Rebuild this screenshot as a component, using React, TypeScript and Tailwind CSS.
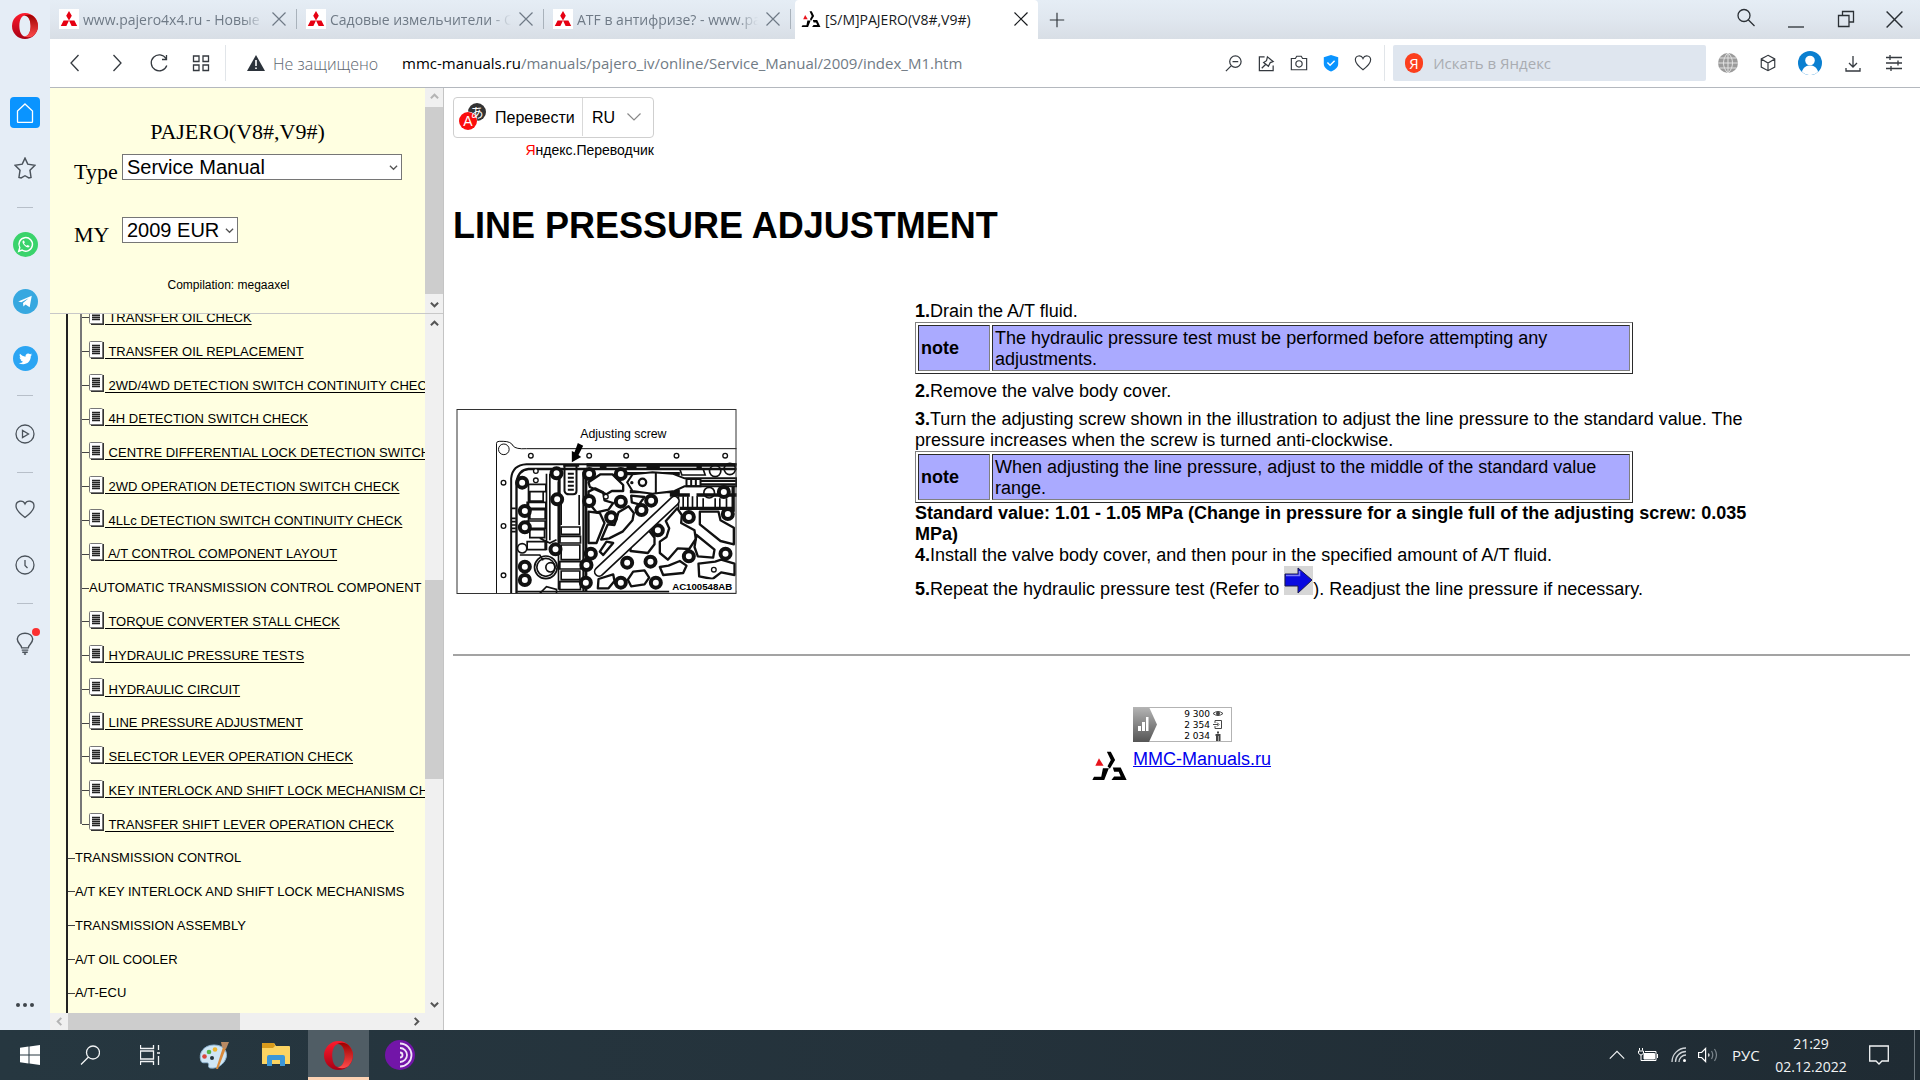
import type { ReactNode } from "react";

interface IIconProps {
  className?: string;
}

interface ITreeRow {
  label: string;
  level: 1 | 2;
  page?: boolean;
  last?: boolean;
}

const treeRows: ITreeRow[] = [
  { label: "TRANSFER OIL CHECK", level: 2, page: true },
  { label: "TRANSFER OIL REPLACEMENT", level: 2, page: true },
  { label: "2WD/4WD DETECTION SWITCH CONTINUITY CHECK", level: 2, page: true },
  { label: "4H DETECTION SWITCH CHECK", level: 2, page: true },
  { label: "CENTRE DIFFERENTIAL LOCK DETECTION SWITCH CHECK", level: 2, page: true },
  { label: "2WD OPERATION DETECTION SWITCH CHECK", level: 2, page: true },
  { label: "4LLc DETECTION SWITCH CONTINUITY CHECK", level: 2, page: true },
  { label: "A/T CONTROL COMPONENT LAYOUT", level: 2, page: true },
  { label: "AUTOMATIC TRANSMISSION CONTROL COMPONENT CHECK", level: 2 },
  { label: "TORQUE CONVERTER STALL CHECK", level: 2, page: true },
  { label: "HYDRAULIC PRESSURE TESTS", level: 2, page: true },
  { label: "HYDRAULIC CIRCUIT", level: 2, page: true },
  { label: "LINE PRESSURE ADJUSTMENT", level: 2, page: true },
  { label: "SELECTOR LEVER OPERATION CHECK", level: 2, page: true },
  { label: "KEY INTERLOCK AND SHIFT LOCK MECHANISM CHECK", level: 2, page: true },
  { label: "TRANSFER SHIFT LEVER OPERATION CHECK", level: 2, page: true, last: true },
  { label: "TRANSMISSION CONTROL", level: 1 },
  { label: "A/T KEY INTERLOCK AND SHIFT LOCK MECHANISMS", level: 1 },
  { label: "TRANSMISSION ASSEMBLY", level: 1 },
  { label: "A/T OIL COOLER", level: 1 },
  { label: "A/T-ECU", level: 1 },
];

const MitsubishiIcon = () => (
  <svg viewBox="0 0 20 20" className="size-5 shrink-0">
    <rect width="20" height="20" fill="#fff" />
    <path d="M10 11.5 7.2 6.7 10 2l2.8 4.7zM10 11.5H4.6L1.8 17h5.6zM10 11.5h5.4l2.8 5.5h-5.6z" fill="#e60012" />
  </svg>
);

const ManualsLogo = ({ className }: IIconProps) => (
  <svg viewBox="0 0 104 88" className={className}>
    <path d="M9 45 20 22 34 45z" fill="#e8131c" />
    <path d="M44 2h12l13 25-16 27-7-8 10-19zM32 52h18L36 88H0l5-10h22zM62 50h24l18 38H58l8-11h20l-6-14H66z" fill="#000" />
  </svg>
);

const OperaIcon = ({ className }: IIconProps) => (
  <svg viewBox="0 0 30 30" className={className}>
    <defs>
      <linearGradient id="operaRing" x1="0" y1="0" x2="0" y2="1">
        <stop offset="0" stopColor="#ff1b2d" />
        <stop offset="1" stopColor="#a70014" />
      </linearGradient>
      <linearGradient id="operaSide" x1="0" y1="0" x2="0" y2="1">
        <stop offset="0" stopColor="#9c0000" />
        <stop offset="1" stopColor="#ff4b4b" />
      </linearGradient>
    </defs>
    <path fillRule="evenodd" d="M15 0a15 15 0 1 0 0 30 15 15 0 0 0 0-30zm0 3c4 0 6.500 5.400 6.500 12S19 27 15 27 8.500 21.600 8.500 15 11 3 15 3z" fill="url(#operaRing)" />
    <path d="M13.500 3.200C18 1 23 1.800 25.500 4.500a15 15 0 0 1 0 21c-2.500 2.700-7.500 3.500-12 1.300 5 .8 8-5 8-11.800s-3-12.600-8-11.800z" fill="url(#operaSide)" />
  </svg>
);

const CloseIcon = ({ className }: IIconProps) => (
  <svg viewBox="0 0 14 14" className={className} fill="none" stroke="currentColor" strokeWidth="1.200">
    <path d="M.5.5l13 13M13.500.5l-13 13" />
  </svg>
);

// Outline icons of the browser chrome all share one stroke style
const LineIcon = ({ d, className = "size-5" }: { d: string; className?: string }) => (
  <svg viewBox="0 0 20 20" className={className} fill="none" stroke="currentColor" strokeWidth="1.300">
    <path d={d} />
  </svg>
);

interface ITabProps {
  title: string;
  active?: boolean;
}

const Tab = ({ title, active }: ITabProps) => (
  <div
    className={
      active
        ? "flex h-full w-[243px] items-center gap-1 rounded-t bg-white pr-[6px] pl-[6px] pb-px text-[#16191c]"
        : "flex h-full w-[247px] items-center gap-1 pl-[9px] pb-px text-[#6f7a86]"
    }
  >
    {active ? <ManualsLogo className="h-4 w-5 shrink-0" /> : <MitsubishiIcon />}
    <span
      className={
        active
          ? "flex-1 truncate text-[14px]"
          : "flex-1 overflow-hidden text-[14px] whitespace-nowrap [mask-image:linear-gradient(to_right,#000_88%,transparent_100%)]"
      }
    >
      {title}
    </span>
    <button aria-label="Закрыть вкладку" className="px-1">
      <CloseIcon className="size-[14px]" />
    </button>
    {!active && <span className="ml-[2px] h-5 w-px bg-[#a9b2bb]" />}
  </div>
);

const TabBar = () => (
  <header className="flex h-[39px] items-center bg-linear-to-b from-[#e5edf5] via-[#e0e7ef] to-[#d8dee5]">
    <Tab title="www.pajero4x4.ru - Новые сообщения" />
    <Tab title="Садовые измельчители - Общий форум" />
    <Tab title="ATF в антифризе? - www.pajero4x4.ru" />
    <div className="h-full pl-1">
      <Tab title="[S/M]PAJERO(V8#,V9#)" active />
    </div>
    <button aria-label="Новая вкладка" className="ml-[10px] text-[#30363b]">
      <LineIcon d="M10 2v16M2 10h16" className="size-[18px]" />
    </button>
    <div className="ml-auto flex items-center gap-[30px] pr-[17px] text-[#2b3035]">
      <button aria-label="Поиск" className="pb-1">
        <LineIcon d="M8 1.500a6 6 0 1 1 0 12 6 6 0 0 1 0-12M12.500 12l6 6" />
      </button>
      <button aria-label="Свернуть">
        <LineIcon d="M2 17h16" />
      </button>
      <button aria-label="Развернуть" className="pb-px">
        <LineIcon d="M2.500 6.500h10.500v11H2.500zM6.500 6V2.500h11V13h-4" />
      </button>
      <button aria-label="Закрыть">
        <CloseIcon className="size-[17px]" />
      </button>
    </div>
  </header>
);

const Divider = () => <span className="h-9 w-px bg-[#e1e5e9]" />;

const Toolbar = () => (
  <div className="flex h-[49px] items-center border-b border-[#b4b8be] bg-white text-[#34393f]">
    <div className="flex items-center gap-[22px] pl-[15px]">
      <button aria-label="Назад">
        <LineIcon d="M13.500 2 6 10l7.500 8" />
      </button>
      <button aria-label="Вперёд">
        <LineIcon d="M6.500 2 14 10l-7.500 8" />
      </button>
      <button aria-label="Обновить">
        <LineIcon d="M17 5.500a8 8 0 1 0 .8 7M17.500 2v4.500H13" />
      </button>
      <button aria-label="Экспресс-панель">
        <LineIcon d="M2.500 3h5.500v5.500H2.500zM12 3h5.500v5.500H12zM2.500 12h5.500v5.500H2.500zM12 12h5.500v5.500H12z" />
      </button>
    </div>
    <div className="ml-[14px] flex">
      <Divider />
    </div>
    <svg viewBox="0 0 18 16" className="ml-[21px] h-4 w-[18px]">
      <path d="M9 0 18 16H0z" fill="#2b323a" />
      <path d="M9 5v6M9 12.500v1.500" stroke="#fff" strokeWidth="1.600" />
    </svg>
    <span className="ml-2 w-[108px] pt-[2px] text-[16px] font-light whitespace-nowrap text-[#5d666f]">Не защищено</span>
    <a href="#address" className="ml-[21px] flex-1 truncate text-[15px] text-[#717b85]">
      <span className="text-black">mmc-manuals.ru</span>/manuals/pajero_iv/online/Service_Manual/2009/index_M1.htm
    </a>
    <div className="flex items-center gap-[14px] pr-3">
      <button aria-label="Масштаб">
        <LineIcon d="M12 2a6 6 0 1 1 0 12 6 6 0 0 1 0-12M7.500 12.500 2 18M9 8h6" className="size-[19px]" />
      </button>
      <button aria-label="Изменить">
        <LineIcon d="M8 3H2.500v14.500H17V12M11 3l6 5-3 1-2 4-5-4 3-2zM9 11l-4 4" className="size-[19px]" />
      </button>
      <button aria-label="Снимок">
        <LineIcon d="M1.500 5h4.500l1.500-2.500h5L14 5h4.500v12.500h-17zM10 7.500a3.500 3.500 0 1 1 0 7 3.500 3.500 0 0 1 0-7" className="size-[18px]" />
      </button>
      <button aria-label="Блокировка рекламы">
        <svg viewBox="0 0 20 20" className="size-[18px]">
          <path d="M10 1l8 2.500V11c0 4-4 6.500-8 8.500-4-2-8-4.500-8-8.500V3.500z" fill="#0a94ff" />
          <path d="M6 9.500l3 3 5-5" stroke="#fff" strokeWidth="1.600" fill="none" />
        </svg>
      </button>
      <button aria-label="В избранное">
        <LineIcon d="M10 17.500C4 13 1.500 10 1.500 6.500c0-5 6.500-6 8.500-1.500 2-4.500 8.500-3.500 8.500 1.500 0 3.500-2.500 6.500-8.500 11z" className="size-[18px]" />
      </button>
    </div>
    <Divider />
    <label className="ml-2 flex h-9 w-[313px] items-center gap-[10px] rounded-xs bg-[#dfe6ef] pl-3">
      <span className="flex size-5 items-center justify-center rounded-full bg-[#fc3f1d] text-[15px] leading-5 text-white">Я</span>
      <input aria-label="Поиск" placeholder="Искать в Яндекс" className="w-full bg-transparent text-[15px] outline-none placeholder:text-[#a9acb1]" />
    </label>
    <div className="flex items-center gap-[21px] pr-4 pl-3">
      <svg viewBox="0 0 20 20" className="size-5">
        <circle cx="10" cy="10" r="10" fill="#9b9b9b" />
        <path d="M0 10h20M1.500 5h17M1.500 15h17M10 0v20M10 0C4 5 4 15 10 20M10 0c6 5 6 15 0 20" stroke="#e2e2e2" strokeWidth="1" fill="none" />
      </svg>
      <button aria-label="Кошелёк">
        <LineIcon d="M10 1.500 17.500 5.500v9L10 18.500 2.500 14.500v-9zM2.500 5.500 10 10l7.500-4.500M10 10v8.500" className="size-[18px]" />
      </button>
      <button aria-label="Профиль">
        <svg viewBox="0 0 24 24" className="size-6">
          <circle cx="12" cy="12" r="12" fill="#0a7fd0" />
          <circle cx="12" cy="9.500" r="4.800" fill="#fff" />
          <path d="M4 21c1-5 4.500-6.500 8-6.500s7 1.500 8 6.500a12 12 0 0 1-16 0z" fill="#fff" />
        </svg>
      </button>
      <button aria-label="Загрузки">
        <LineIcon d="M10 3v11M6 10l4 4 4-4M3 15v3h14v-3" />
      </button>
      <button aria-label="Настройки">
        <LineIcon d="M2 4.500h16M2 10h16M2 15.500h16M6 2v5M14 7.500v5M7 13v5" />
      </button>
    </div>
  </div>
);

const RailLine = () => <span className="h-px w-4 shrink-0 bg-[#b7bfc9]" />;

const Rail = () => (
  <nav className="flex w-[50px] shrink-0 flex-col items-center bg-[#e5edf6] pb-[23px] text-[#4b535b]">
    <OperaIcon className="mt-[13px] size-[26px]" />
    <button aria-label="Главная" className="mt-[58px] flex h-[31px] w-[30px] items-center justify-center rounded-sm bg-[#0a94ff] text-white">
      <LineIcon d="M10 1 17.500 8v10.500a1 1 0 0 1-1 1h-13a1 1 0 0 1-1-1V8z" />
    </button>
    <button aria-label="Закладки" className="mt-[29px]">
      <LineIcon d="M10 1l2.500 5.500 6.500 1-4.500 4.500 1 6.500-2 .5-3.500-2-3.500 2-2-.5 1-6.500L1 7.500l6.500-1z" className="size-[22px]" />
    </button>
    <div className="mt-7 flex">
      <RailLine />
    </div>
    <button aria-label="WhatsApp" className="mt-6">
      <svg viewBox="0 0 24 24" className="size-[25px]">
        <circle cx="12" cy="12" r="12" fill="#3ad36b" />
        <path d="M5.500 18.500l1-3.500a6.500 6.500 0 1 1 2.300 2.400z" fill="none" stroke="#fff" strokeWidth="1.400" />
        <path d="M9.500 8.500c-1 1 0 3 1.500 4.500s3.500 2.500 4.500 1.500l.5-1-2-1-1 .8c-1-.4-2-1.400-2.400-2.400l.8-.9-.9-1.900z" fill="#fff" />
      </svg>
    </button>
    <button aria-label="Telegram" className="mt-8">
      <svg viewBox="0 0 24 24" className="size-[25px]">
        <circle cx="12" cy="12" r="12" fill="#37a8e0" />
        <path d="M5 12 18 6.500 16 17.500l-4-2.700-2 2-.4-3.400 5.400-4.600-7 4z" fill="#fff" />
      </svg>
    </button>
    <button aria-label="Twitter" className="mt-8">
      <svg viewBox="0 0 24 24" className="size-[25px]">
        <circle cx="12" cy="12" r="12" fill="#2ba5f3" />
        <path d="M18.500 8.200l-1.400.5.9-1.400-1.600.6a2.600 2.600 0 0 0-4.400 2.300c-2.200-.1-4-1.200-5.300-2.700-.7 1.200-.3 2.700.8 3.500l-1.100-.3c0 1.200.8 2.300 2 2.600h-1.100c.3 1 1.300 1.700 2.400 1.800A5.400 5.400 0 0 1 5.500 16.200c5.300 3.300 11.800-.2 11.600-6.600z" fill="#fff" />
      </svg>
    </button>
    <div className="mt-6 flex">
      <RailLine />
    </div>
    <button aria-label="Плеер" className="mt-7">
      <LineIcon d="M10 1a9 9 0 1 1 0 18 9 9 0 0 1 0-18M7.500 6.500v7l6-3.500z" />
    </button>
    <div className="mt-7 flex">
      <RailLine />
    </div>
    <button aria-label="Избранное" className="mt-[26px]">
      <LineIcon d="M10 18.500C4 14 1 10.500 1 7c0-5.500 7-6.500 9-2 2-4.500 9-3.500 9 2 0 3.500-3 7-9 11.500z" />
    </button>
    <button aria-label="История" className="mt-9">
      <LineIcon d="M10 1a9 9 0 1 1 0 18 9 9 0 0 1 0-18M10 5v5.500l2.500 2.500" />
    </button>
    <div className="mt-7 flex">
      <RailLine />
    </div>
    <button aria-label="Советы" className="relative mt-7">
      <LineIcon d="M7 14c0-3-4-4-4-8 0-7 14-7 14 0 0 4-4 5-4 8zM7 16h6M7.500 18h5M9 19.500h2" className="h-[23px] w-[22px]" />
      <span className="absolute -top-1 -right-1 size-2 rounded-full bg-[#fb3030]" />
    </button>
    <button aria-label="Ещё" className="mt-auto flex gap-[3px]">
      <span className="size-1 rounded-full bg-[#3f454b]" />
      <span className="size-1 rounded-full bg-[#3f454b]" />
      <span className="size-1 rounded-full bg-[#3f454b]" />
    </button>
  </nav>
);

const Chevron = ({ d, dim }: { d: string; dim?: boolean }) => (
  <svg viewBox="0 0 10 10" className={dim ? "size-[9px] shrink-0 text-[#b4b4b4]" : "size-[9px] shrink-0 text-[#555]"}>
    <path d={d} fill="none" stroke="currentColor" strokeWidth="2.200" />
  </svg>
);

const UP = "M1 7l4-4 4 4";
const DOWN = "M1 3l4 4 4-4";

interface ISelectProps {
  id: string;
  label: string;
  value: string;
  wide?: boolean;
}

const FrameSelect = ({ id, label, value, wide }: ISelectProps) => (
  <div className="flex h-[26px] items-start">
    <label htmlFor={id} className="w-12 pt-[5px] font-['Liberation_Serif',serif] text-[22px] leading-[26px]">
      {label}
    </label>
    <div className={wide ? "relative w-[280px]" : "relative w-[116px]"}>
      <select
        id={id}
        defaultValue={value}
        className="h-[26px] w-full appearance-none border border-[#767676] bg-white pl-1 text-[20px] leading-6 text-black"
      >
        <option>{value}</option>
      </select>
      <span className="pointer-events-none absolute top-[9px] right-1">
        <svg viewBox="0 0 10 10" className="size-[9px] text-[#555]">
          <path d={DOWN} fill="none" stroke="currentColor" strokeWidth="1.400" />
        </svg>
      </span>
    </div>
  </div>
);

const PageIcon = () => (
  <svg viewBox="0 0 16 18" className="h-[18px] w-4 shrink-0">
    <path d="M2 1h13v17H2z" fill="#333" />
    <rect x=".5" y=".5" width="13" height="16" rx="1" fill="#fff" stroke="#777" />
    <path d="M3 4.500h8M3 6.500h8M3 8.500h8M3 10.500h8M3 12.500h8" stroke="#222" strokeWidth="1.300" />
  </svg>
);

const TreeRow = ({ label, level, page, last }: ITreeRow) => (
  <li className="flex flex-1 items-center pl-4">
    <span className="w-px self-stretch border-l-2 border-[#222]" />
    {level === 2 && (
      <span className="flex self-stretch pl-3">
        <span className={last ? "h-1/2 border-l-2 border-[#777]" : "h-full border-l-2 border-[#777]"} />
      </span>
    )}
    <span className="h-px w-[7px] shrink-0 bg-[#444]" />
    {page ? (
      <a href="#page" className="flex items-center text-[13px] whitespace-nowrap">
        <span className="pb-1">
          <PageIcon />
        </span>
        <span className="whitespace-pre underline underline-offset-2">{" " + label}</span>
      </a>
    ) : (
      <span className="text-[13px] whitespace-nowrap">{label}</span>
    )}
  </li>
);

const NavFrames = () => (
  <aside className="flex w-[394px] shrink-0 flex-col border-r border-[#c4c4c4] text-black">
    <section className="flex h-[226px] border-b border-[#c8c8c8]">
      <div className="flex-1 bg-[#ffffe1] pt-[29px]">
        <h2 className="text-center font-['Liberation_Serif',serif] text-[22px] leading-[30px]">PAJERO(V8#,V9#)</h2>
        <div className="flex flex-col gap-[37px] pt-[7px] pl-6">
          <FrameSelect id="type" label="Type" value="Service Manual" wide />
          <FrameSelect id="my" label="MY" value="2009 EUR" />
        </div>
        <p className="pt-8 pr-[18px] text-center text-[12px] leading-5">Compilation: megaaxel</p>
      </div>
      <div className="flex w-[18px] flex-col items-center justify-between bg-[#f0f0f0] py-1">
        <Chevron d={UP} dim />
        <span className="h-[187px] w-full bg-[#cdcdcd]" />
        <Chevron d={DOWN} />
      </div>
    </section>
    <section className="flex min-h-0 flex-1">
      <div className="flex min-w-0 flex-1 flex-col">
        <div className="min-h-0 flex-1 overflow-hidden bg-[#ffffe1]">
          <ul className="-mt-[13px] flex h-[709px] flex-col">
            {treeRows.map((row) => (
              <TreeRow key={row.label} {...row} />
            ))}
          </ul>
          <div className="h-4 pl-4">
            <div className="h-full border-l-2 border-[#222]" />
          </div>
        </div>
        <div className="flex h-[17px] items-center bg-[#f0f0f0] pr-1 pl-[5px]">
          <Chevron d="M7 1 3 5l4 4" dim />
          <span className="ml-1 h-full w-[172px] bg-[#cdcdcd]" />
          <span className="ml-auto flex">
            <Chevron d="M3 1l4 4-4 4" />
          </span>
        </div>
      </div>
      <div className="flex w-[18px] flex-col items-center bg-[#f0f0f0] pt-[5px] pb-[21px]">
        <Chevron d={UP} />
        <span className="mt-[252px] mb-auto h-[199px] w-full bg-[#cdcdcd]" />
        <Chevron d={DOWN} />
      </div>
    </section>
  </aside>
);

const Note = ({ children }: { children: ReactNode }) => (
  <table className="w-[85%] border-separate border-spacing-[2px] border border-t-[#808080] border-r-[#2b2b2b] border-b-[#2b2b2b] border-l-[#808080]">
    <tbody>
      <tr className="bg-[#aaaaff]">
        <th className="w-[72px] border border-t-[#2b2b2b] border-r-[#808080] border-b-[#808080] border-l-[#2b2b2b] px-[2px] text-left">note</th>
        <td className="border border-t-[#2b2b2b] border-r-[#808080] border-b-[#808080] border-l-[#2b2b2b] px-[2px] pt-[2px]">{children}</td>
      </tr>
    </tbody>
  </table>
);

const bolts = [
  [247, 263], [350, 235], [448, 237], [543, 237], [448, 318], [543, 320], [605, 345], [634, 317], [352, 313],
  [255, 348], [255, 397], [514, 367], [654, 406], [747, 366], [852, 291], [864, 357], [857, 476], [747, 484],
  [632, 500], [562, 503], [453, 476], [440, 510], [438, 563], [543, 563], [648, 563], [347, 463], [255, 515], [255, 555],
];

const holes = [[273, 182], [448, 182], [559, 182], [710, 182], [856, 182], [191, 263], [191, 393], [191, 541], [288, 228], [288, 256], [498, 305], [822, 524]];

const pockets = [
  "M446 262l36-24h36l32 32v18h-34l-16 10-50-22z",
  "M446 290l20-10 24 12 4 24 26 8-14 20-36 8-24-30z",
  "M446 350l34 4 14 30-24 60h-24z",
  "M536 352l30-18 16 20-4 22-30 34-40 20-24 4 20-46 20 2z",
  "M574 302l40 4-16 22-22-6z",
  "M572 452l50-52 22 28 0 20-20 26-52-6z",
  "M660 440l20-14 8-26-10-22 34-38 14 20-2 24 40 22 4 26-20 30-34-2-30 34-24-20z",
  "M780 350h56l6 26 40 22v50l-40-10-62-50z",
  "M770 420l54 44-4 24-46-4-10-28z",
  "M660 516l26-4 34-14 20 14-10 22-60 6z",
  "M580 530l34-4 14 22-14 20-40 6-10-20z",
  "M476 552l44-14 4 20-18 22h-32z",
  "M480 470l20-30 20 4-30 36z",
  "M776 506l50-6 18-6 40 12v34l-40-8-26 20-40-8z",
];

const Illustration = () => (
  <svg viewBox="50 42 840 555" className="h-[185px] w-[281px] bg-white" role="img" aria-label="Adjusting screw">
    <g fill="none" stroke="#111" strokeWidth="5">
      <path d="M170 595V145q0-6 8-6h12q24 0 30 14 8 10 40 8H890" strokeWidth="3" />
      <path d="M214 595V250q4-40 46-42H890" strokeWidth="6" />
      <path d="M230 595V262q6-38 36-40H890" strokeWidth="7" />
      <circle cx="192" cy="163" r="16" strokeWidth="3" />
      {/* valve spools on the left */}
      <path d="M266 268h52v22h-52zM270 290h40v28h-40zM262 322h56v18h-56zM270 344h46v28h-46zM262 378h54v22h-54zM270 404h44v24h-44zM262 440h54v24h-54zM320 236v230M330 236v200M266 280v120M300 430l30 14 20-10" />
      <path d="M214 340h14M214 370h14M214 380h14M214 390h14M214 400h14M214 410h14M240 480h60l10 16M300 595l20-20 30 8v12" />
      {/* adjusting screw bore */}
      <path d="M370 212h48M372 222h40M374 212v76q2 10 14 10h12q10 0 10-10v-76M384 236h18M384 248h18M384 260h18M384 272h18M384 284h18" strokeWidth="6" />
      <path d="M356 260v324M364 300v90M418 300v90M430 230v360M364 396h56v22h-56zM360 424h62v20h-62zM364 450h56v44h-56zM360 500h62v22h-62zM364 528h56v26h-56zM360 560h62v24h-62z" />
      <path d="M358 250v190M438 240v350" strokeWidth="9" />
      <circle cx="318" cy="517" r="34" />
      <circle cx="318" cy="517" r="27" />
      <circle cx="332" cy="517" r="14" />
      <circle cx="247" cy="460" r="14" />
      <circle cx="870" cy="222" r="17" />
      <circle cx="826" cy="228" r="17" />
      <circle cx="808" cy="293" r="16" />
      {pockets.map((d) => (
        <path key={d} d={d} strokeWidth="7" strokeLinejoin="round" />
      ))}
      <path d="M440 210h450M480 216h20M560 216h30M620 216h40M770 216h16" strokeWidth="10" />
      <path d="M560 236h160M570 290h150M690 300h60M770 300h120M880 270v80M720 340h160" strokeWidth="10" />
      <path d="M720 222h70l6 18h-70zM716 304v40M730 304v36M744 304v36M758 304v36M772 304v36M790 310v30M840 310v30M826 310v30M860 310v30" />
    </g>
    {/* detent spring */}
    <path d="M562 262l16-24 60-6 60 4 36 14h156v24H734l-30 14-66 8-60-8z" fill="#fff" stroke="#111" strokeWidth="6" />
    <path d="M648 234v60M740 252h42v22h-42zM782 258h108M782 268h108M754 252v22M768 252v22" stroke="#111" strokeWidth="6" fill="none" />
    <circle cx="576" cy="263" r="5" fill="#111" />
    {bolts.map(([x, y]) => (
      <circle key={`${x}-${y}`} cx={x} cy={y} r="15" fill="#fff" stroke="#111" strokeWidth="12" />
    ))}
    <circle cx="608" cy="262" r="11" fill="#fff" stroke="#111" strokeWidth="7" />
    {holes.map(([x, y]) => (
      <circle key={`${x}-${y}`} cx={x} cy={y} r="7" fill="#fff" stroke="#111" strokeWidth="4" />
    ))}
    <path d="M478 530 704 318" stroke="#111" strokeWidth="32" strokeLinecap="round" />
    <path d="M478 530 704 318" stroke="#fff" strokeWidth="22" strokeLinecap="round" />
    <path d="M414 144l16 8-14 28 8 6-28 16 0-34 8 4z" fill="#000" />
    <path d="M232 590H890" stroke="#111" strokeWidth="5" />
    <rect x="688" y="553" width="202" height="40" fill="#fff" />
    <text x="421" y="129" className="font-['Liberation_Sans',sans-serif] text-[37px]">Adjusting screw</text>
    <text x="697" y="584" className="font-['Liberation_Sans',sans-serif] text-[29px] font-bold">AC100548AB</text>
    <rect x="51.500" y="43.500" width="837" height="552" fill="none" stroke="#333" strokeWidth="3" />
  </svg>
);

const Counter = () => (
  <svg viewBox="0 0 99 35" className="h-[35px] w-[99px]">
    <defs>
      <linearGradient id="counterBg" x1="0" y1="0" x2="0" y2="1">
        <stop offset="0" stopColor="#b5b5b5" />
        <stop offset="1" stopColor="#555" />
      </linearGradient>
    </defs>
    <rect x=".5" y=".5" width="98" height="34" fill="#fff" stroke="#b3b3b3" />
    <path d="M0 0h16l8 17.500L16 35H0z" fill="url(#counterBg)" />
    <path d="M5 19h3v5H5zM9 15h3v9H9zM13 10h2.500v14H13z" fill="#fff" />
    <g className="font-['DejaVu_Sans',sans-serif] text-[9px]" textAnchor="end">
      <text x="77" y="10">9 300</text>
      <text x="77" y="21">2 354</text>
      <text x="77" y="32">2 034</text>
    </g>
    <path d="M80 6.500q5-4 10 0-5 4-10 0z" fill="none" stroke="#444" />
    <circle cx="85" cy="6.500" r="2" fill="#444" />
    <path d="M82 13.500h6.500v8H82v-2.500M82 16v-2.500M80 17.500h5M84 15.500l2 2-2 2" fill="none" stroke="#444" />
    <path d="M85 24.500v2M82.500 28h5M84 28v6M86.500 28v6" stroke="#444" strokeWidth="2" />
  </svg>
);

const ManualPage = () => (
  <main className="min-w-0 flex-1 bg-white pt-[9px] pr-[10px] pl-[9px] text-[18px] leading-[21px] text-black">
    <div className="w-[201px]">
      <div className="flex h-[41px] items-center rounded-sm border border-[#cfcfcf] pb-px text-[16px]">
        <button className="flex h-full flex-1 items-center gap-2 border-r border-[#d9d9d9] pl-[5px]">
          <svg viewBox="0 0 28 28" className="size-7">
            <circle cx="18" cy="9" r="9" fill="#333" />
            <circle cx="9" cy="18" r="9.500" fill="#fff" />
            <circle cx="9" cy="18" r="9" fill="#fb0d0d" />
            <text x="18" y="14" textAnchor="middle" fill="#fff" className="font-['Noto_Sans_CJK_JP',sans-serif] text-[13px]">あ</text>
            <text x="9" y="23" textAnchor="middle" fill="#fff" className="font-['Liberation_Sans',sans-serif] text-[14px]">A</text>
          </svg>
          Перевести
        </button>
        <button className="flex h-full w-[70px] items-center justify-between pr-3 pl-[9px]">
          RU
          <svg viewBox="0 0 14 8" className="h-2 w-[14px]">
            <path d="M.5.5 7 7l6.500-6.500" fill="none" stroke="#888" strokeWidth="1.200" />
          </svg>
        </button>
      </div>
      <p className="pt-[2px] text-right text-[14px]">
        <span className="text-[#f00]">Я</span>ндекс.Переводчик
      </p>
    </div>
    <h1 className="pt-11 text-[36px] leading-[42px] font-bold">LINE PRESSURE ADJUSTMENT</h1>
    <div className="flex items-end pt-[54px]">
      <div className="w-[462px] shrink-0 px-[3px] pb-[6px]">
        <Illustration />
      </div>
      <div className="w-[58%]">
        <p>
          <b>1.</b>Drain the A/T fluid.
        </p>
        <Note>The hydraulic pressure test must be performed before attempting any adjustments.</Note>
        <p className="pt-[7px]">
          <b>2.</b>Remove the valve body cover.
        </p>
        <p className="pt-[7px]">
          <b>3.</b>Turn the adjusting screw shown in the illustration to adjust the line pressure to the standard value. The pressure increases when the
          screw is turned anti-clockwise.
        </p>
        <Note>When adjusting the line pressure, adjust to the middle of the standard value range.</Note>
        <p className="font-bold">Standard value: 1.01 - 1.05 MPa (Change in pressure for a single full of the adjusting screw: 0.035 MPa)</p>
        <p>
          <b>4.</b>Install the valve body cover, and then pour in the specified amount of A/T fluid.
        </p>
        <p>
          <b>5.</b>Repeat the hydraulic pressure test (Refer to{" "}
          <a href="#refer" aria-label="Refer" className="inline-block align-baseline">
            <svg viewBox="0 0 29 29" className="size-[29px] bg-[#d6d6d6]">
              <path d="M1 8h13V2l14 12-14 13v-7H1z" fill="#0a0ae0" stroke="#1a1a4a" />
              <path d="M2 9.500h13.500V5" fill="none" stroke="#7c7cf5" strokeWidth="1.500" />
            </svg>
          </a>
          ). Readjust the line pressure if necessary.
        </p>
      </div>
    </div>
    <hr className="mt-[54px] border-t-2 border-[#a3a3a3]" />
    <footer className="mt-[51px] flex items-end justify-center gap-[6px]">
      <ManualsLogo className="h-[29px] w-[35px]" />
      <div className="pb-[10px]">
        <Counter />
        <a href="#home" className="mt-[7px] block text-[#0000ee] underline">
          MMC-Manuals.ru
        </a>
      </div>
    </footer>
  </main>
);

const Taskbar = () => (
  <footer className="flex h-[50px] items-center bg-linear-to-r from-[#263740] via-[#24323b] to-[#1f2b33] pr-[5px] text-[#f2f4f5]">
    <button aria-label="Пуск" className="ml-5">
      <svg viewBox="0 0 20 20" className="size-5">
        <path d="M0 2.800 8.500 1.600v7.900H0zM9.500 1.500 20 0v9.500H9.500zM0 10.500h8.500v7.900L0 17.200zM9.500 10.500H20V20L9.500 18.500z" fill="#fff" />
      </svg>
    </button>
    <button aria-label="Поиск" className="ml-10">
      <LineIcon d="M13 1a6.500 6.500 0 1 1 0 13 6.500 6.500 0 0 1 0-13M8.500 12 1 19.500" />
    </button>
    <button aria-label="Представление задач" className="ml-10">
      <LineIcon d="M.5 0v3.500h13V0M.5 20v-3.500h13V20M.5 6h13v8H.5zM18.500 0v5M18.500 11v9M17 8h3" />
    </button>
    <button aria-label="Paint" className="ml-[39px]">
      <svg viewBox="0 0 30 28" className="h-7 w-[30px]">
        <path d="M2 20C-1 12 5 4 15 4s14 7 12 13-8 11-16 10c-3-1 0-4-2-5s-6 1-7-2z" fill="#cfe6f5" stroke="#8fb6d3" />
        <circle cx="5.500" cy="15.500" r="2.300" fill="#d9463d" />
        <circle cx="10" cy="11" r="2.300" fill="#54b548" />
        <circle cx="16" cy="8.500" r="2.300" fill="#efb52e" />
        <circle cx="13" cy="17" r="2" fill="#24343d" />
        <path d="M17 28 24 6l3 1-8 21z" fill="#d98a3c" />
        <path d="M22 1l8 0-3 7-4-2z" fill="#b98a63" />
      </svg>
    </button>
    <button aria-label="Проводник" className="ml-[33px]">
      <svg viewBox="0 0 28 24" className="h-6 w-7">
        <path d="M0 1q0-1 1-1h11l2 3h13q1 0 1 1v17H0z" fill="#fcd462" />
        <path d="M0 1q0-1 1-1h11l1 3-2 2H0z" fill="#d99b1c" />
        <path d="M5 23V14q0-2 2-2h14q2 0 2 2v9h-5v-6h-8v6z" fill="#3c97d8" />
      </svg>
    </button>
    <button aria-label="Opera" className="ml-[18px] flex h-full w-[61px] items-center justify-center border-b-[3px] border-[#fdd3b4] bg-[#505d65] pt-[3px]">
      <OperaIcon className="size-[29px]" />
    </button>
    <button aria-label="Tor" className="ml-4">
      <svg viewBox="0 0 30 30" className="size-[30px]">
        <circle cx="15" cy="15" r="15" fill="#7215a8" />
        <path d="M15 3.500a11.500 11.500 0 0 1 0 23M15 8a7 7 0 0 1 0 14M15 12.500a2.500 2.500 0 0 1 0 5" fill="none" stroke="#f0e4f7" strokeWidth="1.800" />
      </svg>
    </button>
    <div className="ml-auto flex items-center text-[14px]">
      <button aria-label="Скрытые значки">
        <LineIcon d="M2 14l8-8 8 8" className="size-[18px]" />
      </button>
      <svg viewBox="0 0 20 14" className="ml-3 h-[14px] w-5" fill="none" stroke="#fff">
        <path d="M1.500 0v2.500M4.500 0v2.500M.5 3h5v2q-1 2-2.500 2T.5 5zM3 7v5.500h15v-9H7M19.500 6v4" />
        <path d="M6 5.500h10.500V11H6z" fill="#fff" />
      </svg>
      <svg viewBox="0 0 16 16" className="ml-[13px] size-4" fill="none" stroke="#cfd4d8" strokeWidth="1.300">
        <path d="M1 15A14 14 0 0 1 15 1M4.500 15A10.500 10.500 0 0 1 15 4.500M8 15a7 7 0 0 1 7-7" />
        <circle cx="13.500" cy="13.500" r="1.500" fill="#fff" stroke="none" />
      </svg>
      <svg viewBox="0 0 20 16" className="ml-[11px] h-4 w-5" fill="none" stroke="#fff" strokeWidth="1.200">
        <path d="M.6 5.500h3l4-4v13l-4-4h-3zM10.500 6.500q1 1.500 0 3" />
        <path d="M13.500 4q2.500 4 0 8M16.500 2q4 6 0 12" stroke="#7c868d" />
      </svg>
      <span className="ml-[14px] w-[27px] text-[15px]">РУС</span>
      <time className="ml-4 w-[72px] text-center leading-[23px]">
        21:29
        <br />
        02.12.2022
      </time>
      <button aria-label="Уведомления" className="ml-[22px]">
        <LineIcon d="M.7 1h18.600v15H13l-3 3-3-3H.7z" />
      </button>
      <span className="ml-[25px] h-[50px] w-px bg-[#6c777e]" />
    </div>
  </footer>
);

export default function App() {
  return (
    <div className="flex h-screen flex-col overflow-hidden font-['Open_Sans','Noto_Sans',sans-serif]">
      <div className="flex min-h-0 flex-1">
        <Rail />
        <div className="flex min-w-0 flex-1 flex-col">
          <TabBar />
          <Toolbar />
          <div className="flex min-h-0 flex-1 font-['Liberation_Sans',sans-serif]">
            <NavFrames />
            <ManualPage />
          </div>
        </div>
      </div>
      <Taskbar />
    </div>
  );
}
